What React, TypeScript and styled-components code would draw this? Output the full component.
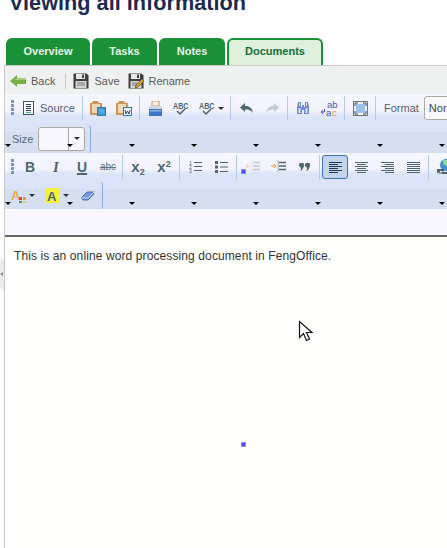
import React from "react";
import styled, { createGlobalStyle } from "styled-components";

const Global = createGlobalStyle`
  html, body { margin: 0; padding: 0; background: #fff; }
  body { width: 447px; height: 548px; overflow: hidden; font-family: "Liberation Sans", Arial, sans-serif; }
  #root { height: 548px; overflow: hidden; }
`;

const Page = styled.div`
  position: relative;
  width: 447px;
  height: 548px;
  overflow: hidden;
`;
const Heading = styled.h1`
  margin: -9px 0 23px 9px;
  font-size: 21.7px;
  line-height: 24px;
  font-weight: 700;
  color: #1c2a4f;
  white-space: nowrap;
`;
const Tabs = styled.div`
  display: flex;
  gap: 2px;
  padding-left: 6px;
  height: 27px;
`;
const Tab = styled.div<{ $w: number; $active?: boolean }>`
  width: ${(p) => p.$w}px;
  box-sizing: border-box;
  height: 27px;
  border: 2px solid #1a9136;
  border-bottom: 0;
  border-radius: 6px 6px 0 0;
  background: ${(p) => (p.$active ? "#dff0dc" : "#1a9136")};
  color: ${(p) => (p.$active ? "#14703a" : "#e8f5ea")};
  font-size: 11px;
  font-weight: 700;
  display: flex;
  align-items: center;
  justify-content: center;
  padding-bottom: 3px;
`;
const Panel = styled.div`
  margin-left: 4px;
  width: 443px;
  height: 484px;
  border-left: 1px solid #c8c8c8;
  border-top: 1px solid #c9c9c9;
  box-sizing: border-box;
  display: flex;
  flex-direction: column;
  background: #fffffe;
`;
const BackBar = styled.div`
  height: 28px;
  box-sizing: border-box;
  flex: none;
  background: #eff1f0;
  display: flex;
  align-items: center;
  padding: 2px 0 0 5px;
  color: #5a5a5a;
  font-size: 11px;
`;
const BarLabel = styled.span<{ $ml?: number }>`
  margin-left: ${(p) => p.$ml ?? 5}px;
`;
const BarSep = styled.span`
  width: 1px;
  height: 16px;
  background: #b9cde4;
  margin: 0 7px 0 10px;
`;
const BarGap = styled.span`
  width: 8px;
`;
const Editor = styled.div`
  position: relative;
  flex: none;
  height: 141px;
  background: #f9f7fe;
`;
const LightRow = styled.div<{ $h: number }>`
  height: ${(p) => p.$h}px;
  box-sizing: border-box;
  display: flex;
  align-items: center;
  overflow: hidden;
  padding: 0 0 2px 6px;
  background: linear-gradient(#f6f6ff 0, #f3f3fe 55%, #e9edfb 62%, #dde5f9 72%, #dae3f8 100%);
  color: #5a6a78;
`;
const DarkRow = styled.div<{ $h: number; $split: number }>`
  height: ${(p) => p.$h}px;
  display: flex;
  align-items: center;
  padding-left: 6px;
  background: linear-gradient(#dae3f8 0, #dae3f8 ${(p) => p.$split}px, #d6def2 ${(p) => p.$split}px);
`;
const Grip = styled.span`
  width: 3px;
  height: 16px;
  flex: none;
  margin-right: 1px;
  background: radial-gradient(circle at 1.5px 1.5px, #6f8fd8 1.4px, transparent 1.5px) 0 0 / 3px 4px;
`;
const Group = styled.div<{ $flush?: boolean }>`
  display: flex;
  flex: none;
  align-items: center;
  padding: 0 ${(p) => (p.$flush ? 1 : 2)}px 0 2px;
  height: 24px;
  border-right: 1px solid #b5c9ec;
`;
const Slot = styled.span<{ $w?: number }>`
  width: ${(p) => p.$w ?? 26}px;
  height: 24px;
  flex: none;
  display: flex;
  align-items: center;
  justify-content: center;
  box-sizing: border-box;
`;
const ActiveSlot = styled(Slot)`
  background: #c2d5ec;
  border: 1.5px solid #3a72c5;
  border-radius: 3px;
`;
const SourceButton = styled.span`
  width: 68px;
  box-sizing: border-box;
  height: 24px;
  display: flex;
  align-items: center;
  gap: 6px;
  padding-left: 8px;
  border-right: 1px solid #b5c9ec;
  font-size: 11px;
  color: #5a6270;
  flex: none;
`;
const FormatLabel = styled.span`
  margin-left: 8px;
  margin-right: 5px;
  font-size: 11px;
  color: #5a5f68;
`;
const Combo = styled.div<{ $w: number }>`
  width: ${(p) => p.$w}px;
  height: 24px;
  box-sizing: border-box;
  flex: none;
  border: 1px solid #a9a9a0;
  border-radius: 3px;
  background: #f8f7fe;
  display: flex;
  font-size: 11px;
  color: #444;
`;
const ComboText = styled.span`
  padding: 5px 0 0 4px;
  white-space: nowrap;
`;
const ComboFill = styled.span`
  flex: 1;
`;
const ComboArrow = styled.span`
  width: 15px;
  border-left: 1px solid #a9a9a0;
  display: flex;
  align-items: center;
  justify-content: center;
`;
const SmallArrow = styled.i<{ $ml?: number }>`
  width: 0;
  height: 0;
  margin-left: ${(p) => p.$ml ?? 0}px;
  border-left: 3px solid transparent;
  border-right: 3px solid transparent;
  border-top: 3px solid #333;
  flex: none;
`;
const SizeLabel = styled.span`
  margin: 0 5px 0 1px;
  font-size: 11px;
  color: #5a6a78;
`;
const Bracket = styled.span<{ $h: number; $ml: number }>`
  width: 3px;
  height: ${(p) => p.$h}px;
  margin-left: ${(p) => p.$ml}px;
  border-right: 1.5px solid #8cabe8;
  border-radius: 0 3px 3px 0;
  box-sizing: border-box;
  flex: none;
`;
const DropTool = styled.span<{ $w: number }>`
  width: ${(p) => p.$w}px;
  height: 20px;
  flex: none;
  display: flex;
  align-items: center;
  gap: 3px;
`;
const ToolsGap = styled.div`
  display: flex;
  align-items: center;
  gap: 5px;
`;
const Marks = styled.div<{ $top: number }>`
  position: absolute;
  top: ${(p) => p.$top}px;
  left: 0;
  display: flex;
  gap: 56px;
`;
const Mark = styled.i`
  width: 0;
  height: 0;
  border-left: 3px solid transparent;
  border-right: 3px solid transparent;
  border-top: 3px solid #000;
`;
const Glyph = styled.span<{ $serif?: boolean; $under?: boolean; $size?: number }>`
  font-family: ${(p) => (p.$serif ? '"Liberation Serif", serif' : '"Liberation Sans", sans-serif')};
  font-style: ${(p) => (p.$serif ? "italic" : "normal")};
  font-weight: 700;
  font-size: ${(p) => p.$size ?? 14}px;
  line-height: 14px;
  color: #4d6570;
  text-decoration: ${(p) => (p.$under ? "underline" : "none")};
  text-underline-offset: 1px;
  text-decoration-thickness: 1.5px;
`;
const Strike = styled.span`
  font-size: 10px;
  color: #5f7580;
  text-decoration: line-through;
`;
const Script = styled.sub`
  font-size: 9px;
  line-height: 0;
  vertical-align: -3px;
`;
const Super = styled.sup`
  font-size: 9px;
  line-height: 0;
  vertical-align: 5px;
`;
const Rule = styled.div`
  height: 2px;
  flex: none;
  background: #666;
`;
const Body = styled.div`
  flex: 1;
  padding: 12px 9px;
  font-size: 12px;
  line-height: 14px;
  color: #333;
  letter-spacing: 0.105px;
  white-space: nowrap;
  background: #fffffe;
`;
const Handle = styled.div`
  position: absolute;
  left: 0;
  top: 258px;
  width: 4px;
  height: 32px;
  background: #ececec;
  border-radius: 4px 0 0 4px;
  display: flex;
  align-items: center;
`;
const HandleArrow = styled.i`
  width: 0;
  height: 0;
  border-top: 2px solid transparent;
  border-bottom: 2px solid transparent;
  border-right: 3px solid #888;
`;
const Dot = styled.div`
  position: absolute;
  left: 241px;
  top: 442px;
  width: 5px;
  height: 5px;
  background: #4f4ff5;
  box-shadow: inset 0 0 0 1px #8a8aff;
`;
const SmallDot = styled(Dot)`
  top: 169px;
  left: 241px;
`;
const Cursor = styled.svg`
  position: absolute;
  left: 298px;
  top: 320px;
`;

const Back = () => (
  <svg width="16" height="14" viewBox="0 0 16 14">
    <path d="M0 7 7 1v3h9v6H7v3z" fill="#74b043" />
    <path d="M7 4h9v2H4z" fill="#a6d07a" />
  </svg>
);
const Floppy = ({ pencil }: { pencil?: boolean }) => (
  <svg width="16" height="16" viewBox="0 0 16 16">
    <path d="M.5.5h13l2 2v13H.5z" fill="#3f3f3f" />
    <rect x="3" y="1" width="9" height="5" fill="#e8e8e8" />
    <rect x="9" y="1.5" width="2" height="3.5" fill="#444" />
    <rect x="2.5" y="8" width="11" height="7" fill="#d6d6d6" />
    <path d="M4 10h8M4 12h8" stroke="#777" />
    {pencil && <path d="M7 15l1-3 6-6 2 2-6 6z" fill="#d8a23a" stroke="#5a4a20" strokeWidth=".7" />}
  </svg>
);
const SourceIcon = () => (
  <svg width="11" height="14" viewBox="0 0 11 14">
    <rect x=".5" y=".5" width="10" height="13" fill="#fbfbfb" stroke="#4a5560" />
    <path d="M3 3.500h5M3 5.500h5M3 7.500h5M3 9.500h5" stroke="#2f4050" />
    <path d="M3 11.500h5" stroke="#4a8" />
  </svg>
);
const Paste = ({ word }: { word?: boolean }) => (
  <svg width="16" height="16" viewBox="0 0 16 16">
    <path d="M0 3h2l1-2h5l1 2h3v12H0z" fill="#cf9458" />
    <rect x="2" y="4" width="8" height="9" fill="#ecd9b8" />
    <rect x="7.500" y="7.500" width="8" height="8" fill={word ? "#f4f6ff" : "#3d9ad6"} stroke="#2b7ac0" />
    {word ? (
      <path d="M9 10l1 4 1.500-3 1.500 3 1-4" fill="none" stroke="#2a4a90" />
    ) : (
      <path d="M9 10h5M9 12h5" stroke="#6fc0ee" />
    )}
  </svg>
);
const Print = () => (
  <svg width="13" height="15" viewBox="0 0 13 15">
    <rect x="3" y="0" width="7" height="5" fill="#f3f3f3" stroke="#c79a62" />
    <path d="M1 5h11l1 3H0z" fill="#cfd5de" />
    <rect x="0" y="8" width="13" height="7" fill="#3d73c9" />
    <rect x="1" y="9" width="11" height="1.500" fill="#8cb2ea" />
  </svg>
);
const Spell = ({ arrow }: { arrow?: boolean }) => (
  <>
    <svg width="18" height="15" viewBox="0 0 18 15">
      <text x="1" y="8" fontFamily="Liberation Sans" fontWeight="700" fontSize="8.500" textLength="15.500" lengthAdjust="spacingAndGlyphs" fill="#4d6570">ABC</text>
      <path d="M5 10l3 3 5-5" fill="none" stroke="#4d6570" strokeWidth="1.500" />
    </svg>
    {arrow && <SmallArrow $ml={2} />}
  </>
);
const Undo = ({ faded, flip }: { faded?: boolean; flip?: boolean }) => (
  <svg width="13" height="10" viewBox="0 0 13 10" style={flip ? { transform: "scaleX(-1)" } : undefined}>
    <path d="M0 4.500 5 0v3c4 0 7 1.500 8 7-2-3-4-3.500-8-3.500V9z" fill={faded ? "#c3ccd6" : "#4d6570"} />
  </svg>
);
const Binoculars = () => (
  <svg width="14" height="14" viewBox="0 0 14 14">
    <path d="M1 6 2 1h3v5h1V4h2v2h1V1h3l1 5v7H8V9H6v4H1z" fill="#6f88dc" />
    <path d="M2.500 7h2v5h-2zM9.500 7h2v5h-2zM3 2h1v3H3zM10 2h1v3h-1z" fill="#dbe3f8" />
  </svg>
);
const Replace = () => (
  <svg width="17" height="15" viewBox="0 0 17 15">
    <text x="6" y="7" fontFamily="Liberation Sans" fontSize="9.500" fill="#4a55c4">ab</text>
    <text x="5" y="15" fontFamily="Liberation Sans" fontSize="9.500" fill="#4a55c4">a</text>
    <text x="11" y="15" fontFamily="Liberation Sans" fontSize="9.500" fill="#e49a3c">c</text>
    <path d="M3.500 8v3H.5M0 11l2-2M0 11l2 2" stroke="#4a55c4" fill="none" />
  </svg>
);
const Maximize = () => (
  <svg width="15" height="15" viewBox="0 0 15 15">
    <rect x=".5" y=".5" width="14" height="14" fill="#f3f4f8" stroke="#6d7780" />
    <rect x="3" y="3" width="9" height="9" fill="#9cc1ea" />
    <path d="M2 5V2h3M10 2h3v3M13 10v3h-3M5 13H2v-3" fill="none" stroke="#3d4d5a" />
  </svg>
);
const ListNum = () => (
  <svg width="13" height="13" viewBox="0 0 13 13">
    <text x="0" y="4.500" fontFamily="Liberation Sans" fontSize="5" fill="#4d6570">1</text>
    <text x="0" y="8.500" fontFamily="Liberation Sans" fontSize="5" fill="#4d6570">2</text>
    <text x="0" y="12.800" fontFamily="Liberation Sans" fontSize="5" fill="#4d6570">3</text>
    <path d="M5 2.500h8M5 6.500h8M5 10.500h8" stroke="#4d6570" />
  </svg>
);
const ListDot = () => (
  <svg width="13" height="12" viewBox="0 0 13 12">
    <path d="M0 0h3v3H0zM0 4.500h3v3H0zM0 9h3v3H0z" fill="#4d6570" />
    <path d="M5 1.500h8M5 6h8M5 10.500h8" stroke="#4d6570" />
  </svg>
);
const Indent = ({ out }: { out?: boolean }) => (
  <svg width="15" height="13" viewBox="0 0 15 13">
    <path d="M7 .5v12" stroke={out ? "#d8dde6" : "#4d6570"} strokeDasharray="1 1" />
    <path d="M8 2.500h7M8 6h7M8 9.500h7" stroke={out ? "#c3ccd6" : "#4d6570"} strokeWidth="1.500" />
    {out ? (
      <path d="M6 6H1M3 4 1 6l2 2" stroke="#f4d9bc" fill="none" />
    ) : (
      <path d="M0 6h5M3 4l2 2-2 2" stroke="#e8963a" fill="none" />
    )}
  </svg>
);
const Quote = () => (
  <svg width="11" height="8" viewBox="0 0 11 8">
    <path d="M0 2a2.500 2.500 0 0 1 5 0c0 2-1 4-3 6l-.5-.5C2 6.500 2 5 2 4.500 1 4.500 0 3.500 0 2zM6 2a2.500 2.500 0 0 1 5 0c0 2-1 4-3 6l-.5-.5C8 6.500 8 5 8 4.500 7 4.500 6 3.500 6 2z" fill="#4d6570" />
  </svg>
);
const Align = ({ mode, color = "#4d6570" }: { mode: "l" | "c" | "r" | "j"; color?: string }) => {
  const short = mode === "j" ? 13 : 9;
  const x = mode === "l" || mode === "j" ? 0 : mode === "c" ? 2 : 4;
  const d = [1, 3, 5, 7, 9, 11]
    .map((y, i) => (i % 2 === 0 ? `M0 ${y}.5h13` : `M${x} ${y}.5h${short}`))
    .join("");
  return (
    <svg width="13" height="12" viewBox="0 0 13 12">
      <path d={d} stroke={color} />
    </svg>
  );
};
const Globe = () => (
  <svg width="15" height="15" viewBox="0 0 15 15">
    <circle cx="9" cy="6" r="6" fill="#3d8fd0" />
    <path d="M6 1l5 0 1 4-3 2-3-2z" fill="#8fdc8a" />
    <path d="M0 10h7v2H3v1H1v1H0zM5 13h7v2H5z" fill="#4d6570" />
    <rect x="1" y="11" width="5" height="3" rx="1" fill="none" stroke="#4d6570" />
  </svg>
);
const FontColor = () => (
  <svg width="15" height="15" viewBox="0 0 15 15">
    <text x="0" y="12" fontFamily="Liberation Sans" fontWeight="700" fontSize="13" fill="#f1a95a">A</text>
    <rect x="8" y="9" width="3" height="3" fill="#d94a3c" />
    <rect x="12" y="9" width="3" height="3" fill="#e0a030" />
    <rect x="8" y="13" width="3" height="2" fill="#3f9a46" />
    <rect x="12" y="13" width="3" height="2" fill="#f0d040" />
  </svg>
);
const Highlight = () => (
  <svg width="15" height="15" viewBox="0 0 15 15">
    <rect width="15" height="15" fill="#f2f23c" />
    <text x="2" y="12.500" fontFamily="Liberation Sans" fontWeight="700" fontSize="13" fill="#4d6570">A</text>
  </svg>
);
const Eraser = () => (
  <svg width="13" height="10" viewBox="0 0 13 10">
    <path d="M0 7 6 1h7v2L7 9H2z" fill="#6f97e6" stroke="#3856b0" strokeWidth=".8" />
    <path d="M0 7h7l6-6" fill="none" stroke="#e4ecfb" strokeWidth=".8" />
  </svg>
);

const markOffsets = Array.from({ length: 8 });

export default function App() {
  return (
    <Page>
      <Global />
      <Heading>Viewing all information</Heading>
      <Tabs>
        <Tab $w={84}>Overview</Tab>
        <Tab $w={65}>Tasks</Tab>
        <Tab $w={66}>Notes</Tab>
        <Tab $w={96} $active>Documents</Tab>
      </Tabs>
      <Panel>
        <BackBar>
          <Back />
          <BarLabel>Back</BarLabel>
          <BarSep />
          <Floppy />
          <BarLabel>Save</BarLabel>
          <BarGap />
          <Floppy pencil />
          <BarLabel $ml={5}>Rename</BarLabel>
        </BackBar>
        <Editor>
          <LightRow $h={30}>
            <Grip />
            <SourceButton>
              <SourceIcon />
              Source
            </SourceButton>
            <Group>
              <Slot><Paste /></Slot>
              <Slot><Paste word /></Slot>
            </Group>
            <Group>
              <Slot><Print /></Slot>
              <Slot><Spell /></Slot>
              <Slot $w={34}><Spell arrow /></Slot>
            </Group>
            <Group>
              <Slot><Undo /></Slot>
              <Slot><Undo faded flip /></Slot>
            </Group>
            <Group>
              <Slot><Binoculars /></Slot>
              <Slot><Replace /></Slot>
            </Group>
            <Group>
              <Slot><Maximize /></Slot>
            </Group>
            <FormatLabel>Format</FormatLabel>
            <Combo $w={60}>
              <ComboText>Normal</ComboText>
            </Combo>
          </LightRow>
          <DarkRow $h={29} $split={8}>
            <SizeLabel>Size</SizeLabel>
            <Combo $w={47}>
              <ComboFill />
              <ComboArrow><SmallArrow /></ComboArrow>
            </Combo>
            <Bracket $h={28} $ml={3} />
          </DarkRow>
          <LightRow $h={29}>
            <Grip />
            <Group $flush>
              <Slot><Glyph>B</Glyph></Slot>
              <Slot><Glyph $serif $size={15}>I</Glyph></Slot>
              <Slot><Glyph $under>U</Glyph></Slot>
              <Slot><Strike>abc</Strike></Slot>
            </Group>
            <Group>
              <Slot><Glyph $size={15}>x<Script>2</Script></Glyph></Slot>
              <Slot><Glyph $size={15}>x<Super>2</Super></Glyph></Slot>
            </Group>
            <Group>
              <Slot><ListNum /></Slot>
              <Slot><ListDot /></Slot>
            </Group>
            <Group>
              <Slot><Indent out /></Slot>
              <Slot><Indent /></Slot>
              <Slot><Quote /></Slot>
            </Group>
            <Group>
              <ActiveSlot><Align mode="l" color="#1c3a58" /></ActiveSlot>
              <Slot><Align mode="c" /></Slot>
              <Slot><Align mode="r" /></Slot>
              <Slot><Align mode="j" /></Slot>
            </Group>
            <Group>
              <Slot><Globe /></Slot>
            </Group>
          </LightRow>
          <DarkRow $h={27} $split={7}>
            <ToolsGap>
              <DropTool $w={29}><FontColor /><SmallArrow /></DropTool>
              <DropTool $w={29}><Highlight /><SmallArrow /></DropTool>
              <Slot $w={16}><Eraser /></Slot>
            </ToolsGap>
            <Bracket $h={27} $ml={5} />
          </DarkRow>
          <Marks $top={50}>
            {markOffsets.map((_, i) => <Mark key={i} />)}
          </Marks>
          <Marks $top={108}>
            {markOffsets.map((_, i) => <Mark key={i} />)}
          </Marks>
        </Editor>
        <Rule />
        <Body>This is an online word processing document in FengOffice.</Body>
      </Panel>
      <Handle><HandleArrow /></Handle>
      <SmallDot />
      <Dot />
      <Cursor width="15" height="23" viewBox="0 0 15 23">
        <path d="M1.500 1.500v16l4-4 3 7 3-1.500-3-6.500h5.500z" fill="#fff" stroke="#111" strokeWidth="1.200" />
      </Cursor>
    </Page>
  );
}
